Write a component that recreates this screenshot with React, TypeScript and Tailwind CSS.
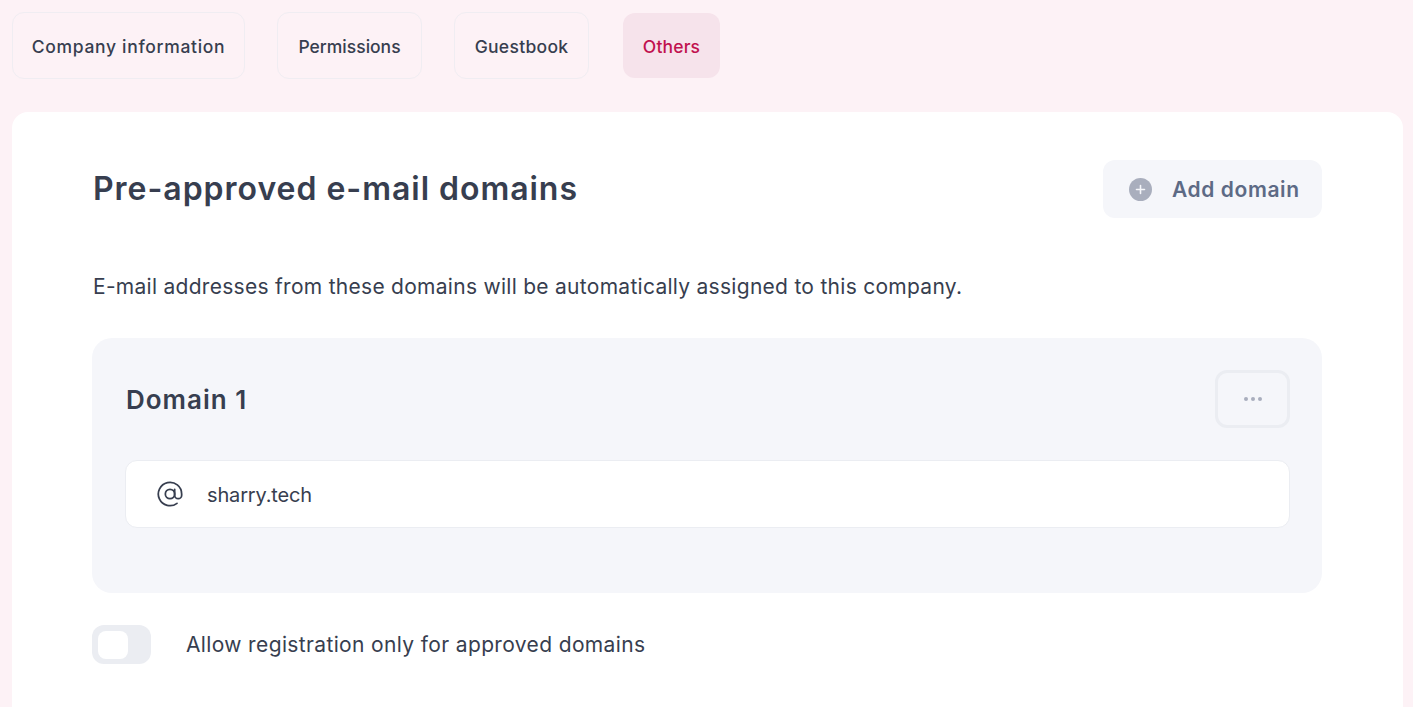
import { AtSign } from "lucide-react";

const tabs = [
  { label: "Company information", className: "w-[233px] tracking-[0.68px]" },
  { label: "Permissions", className: "w-[145px] tracking-[0px]" },
  { label: "Guestbook", className: "w-[135px] tracking-[0.3px]" },
];

export default function App() {
  return (
    <div className="h-screen overflow-hidden bg-[#fdf2f6] px-3 pt-[12px] font-['Inter',sans-serif] text-[#373e4f]">
      <nav className="flex items-center">
        {tabs.map((tab) => (
          <button
            key={tab.label}
            className={`${tab.className} mr-8 h-[67px] rounded-xl border border-[#f0edf2] pt-[4px] text-[17.5px] font-medium`}
          >
            {tab.label}
          </button>
        ))}
        <button className="ml-[2px] h-[65px] w-[97px] rounded-xl bg-[#f6e3eb] pt-[4px] text-[17.5px] font-medium tracking-[0.15px] text-[#c1124f]">
          Others
        </button>
      </nav>

      <main className="mt-[33px] h-[640px] w-[1391px] rounded-2xl bg-white pl-20 pr-[81px] pt-12">
        <div className="flex items-center justify-between">
          <h1 className="ml-px text-[32px] font-semibold tracking-[0.97px]">Pre-approved e-mail domains</h1>
          <button className="flex h-[58px] w-[219px] items-center rounded-xl bg-[#f5f6fa] pl-[26px] text-[21px] font-semibold tracking-[0.6px] text-[#5d6a85]">
            <span className="mr-[20px] flex h-[23px] w-[23px] items-center justify-center rounded-full bg-[#a9aebd]">
              <svg width="11" height="11" viewBox="0 0 11 11" fill="none" stroke="#f5f6fa" strokeWidth="1.6" strokeLinecap="round">
                <path d="M5.5 1.5v8M1.5 5.5h8" />
              </svg>
            </span>
            <span className="pt-px">Add domain</span>
          </button>
        </div>

        <p className="ml-px mt-[55px] text-[21px] leading-7 tracking-[0.28px]">
          E-mail addresses from these domains will be automatically assigned to this company.
        </p>

        <section className="mt-[37px] h-[255px] w-[1230px] rounded-[20px] bg-[#f5f6fa] pl-[33px] pr-8 pt-8">
          <div className="flex items-center justify-between">
            <h2 className="ml-px text-[26px] font-semibold tracking-[1px]">Domain 1</h2>
            <button className="flex h-[58px] w-[75px] items-center justify-center gap-[3px] rounded-xl border-[3px] border-[#ebedf2]">
              <span className="h-[4px] w-[4px] rounded-full bg-[#a9aebd]" />
              <span className="h-[4px] w-[4px] rounded-full bg-[#a9aebd]" />
              <span className="h-[4px] w-[4px] rounded-full bg-[#a9aebd]" />
            </button>
          </div>
          <div className="mt-8 flex h-[68px] items-center rounded-xl border border-[#ebedf2] bg-white pl-[30px]">
            <AtSign size={28} strokeWidth={1.5} />
            <span className="ml-[23px] pt-[2px] text-[20px] tracking-[-0.15px]">sharry.tech</span>
          </div>
        </section>

        <div className="mt-8 flex items-center">
          <span className="flex h-[39px] w-[59px] items-center rounded-xl bg-[#ebedf2] pl-[6px]">
            <span className="h-[28px] w-[30px] rounded-lg bg-white" />
          </span>
          <span className="ml-[35px] text-[21px] tracking-[0.36px]">Allow registration only for approved domains</span>
        </div>
      </main>
    </div>
  );
}
